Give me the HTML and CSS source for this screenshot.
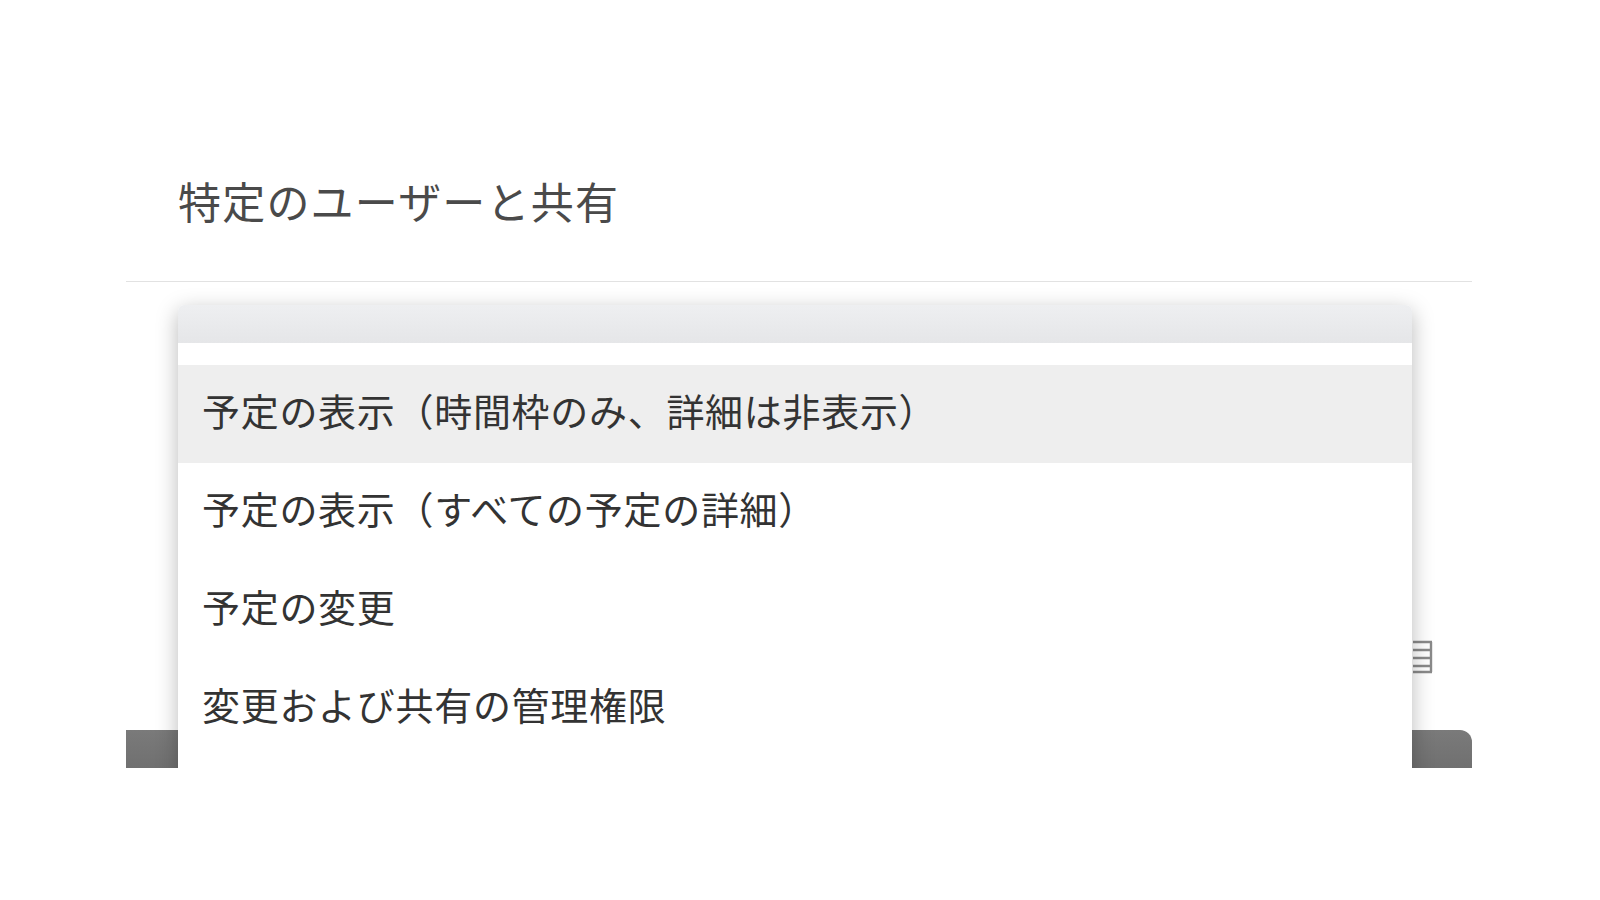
FILE: index.html
```html
<!DOCTYPE html>
<html lang="ja">
<head>
    <meta charset="UTF-8">
    <title>特定のユーザーと共有</title>
    <link rel="stylesheet" href="styles.css">
</head>
<body>
    <div class="dialog">
        <div class="dialog-head">
            <h1>特定のユーザーと共有</h1>
        </div>
        <div class="dialog-body">
            <svg class="side-icon" width="21" height="34" viewBox="0 0 21 34">
                <path d="M1 2h19M1 10h19M1 18h19M1 26h19M1 32h19M19 2v30" fill="none" stroke="#8a8a8a" stroke-width="2.4"/>
            </svg>
            <div class="footer-bar"></div>
            <div class="menu">
                <div class="menu-head"></div>
                <ul class="menu-list">
                    <li class="menu-item selected">予定の表示（時間枠のみ、詳細は非表示）</li>
                    <li class="menu-item">予定の表示（すべての予定の詳細）</li>
                    <li class="menu-item">予定の変更</li>
                    <li class="menu-item">変更および共有の管理権限</li>
                </ul>
            </div>
        </div>
    </div>
</body>
</html>
```

FILE: styles.css
```css
body, html {
    margin: 0;
    padding: 0;
    background: #fff;
    font-family: "Noto Sans CJK JP", "Noto Sans", sans-serif;
}

.dialog {
    margin-left: 126px;
    width: 1346px;
    padding-top: 120px;
}

.dialog-head {
    height: 161px;
    display: flex;
    align-items: center;
    padding-left: 52px;
    border-bottom: 1px solid #e2e2e2;
}

.dialog-head h1 {
    margin: 0;
    font-size: 43px;
    font-weight: 400;
    line-height: 1;
    color: #4a4a4a;
    letter-spacing: 1.2px;
}

.dialog-body {
    position: relative;
    height: 486px;
    overflow: hidden;
}

.footer-bar {
    position: absolute;
    left: 0;
    right: 0;
    bottom: 0;
    height: 38px;
    background: linear-gradient(#7a7a7a, #707070);
    border-top-right-radius: 12px;
}

.side-icon {
    position: absolute;
    left: 1286px;
    top: 358px;
}

.menu {
    position: absolute;
    left: 52px;
    top: 23px;
    width: 1234px;
    background: #fff;
    border-radius: 6px 6px 0 0;
    box-shadow: 0 6px 22px rgba(0, 0, 0, 0.28);
}

.menu-head {
    height: 38px;
    border-radius: 6px 6px 0 0;
    background: linear-gradient(#eeeff1, #e5e6e8);
}

.menu-list {
    list-style: none;
    margin: 0;
    padding: 22px 0 40px;
}

.menu-item {
    height: 98px;
    display: flex;
    align-items: center;
    padding: 0 0 9px 24px;
    box-sizing: border-box;
    font-size: 38px;
    line-height: 1;
    letter-spacing: 0.7px;
    color: #333;
}

.menu-item.selected {
    background: #eeeeee;
}
```
